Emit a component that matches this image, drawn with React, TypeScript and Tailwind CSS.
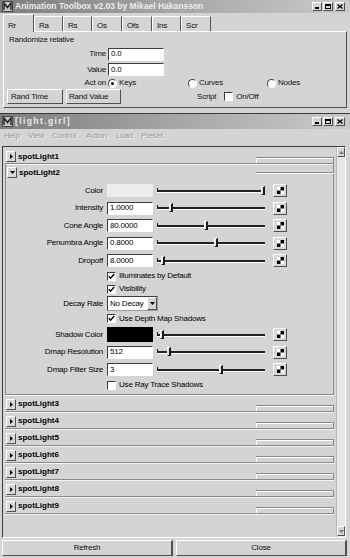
import React from "react";

const raised =
  "border border-t-white border-l-white border-r-[#505050] border-b-[#505050]";
const sunken =
  "border border-t-[#3c3c3c] border-l-[#3c3c3c] border-r-white border-b-white";

function MayaIcon() {
  return (
    <svg width="11" height="11" viewBox="0 0 11 11">
      <rect x="0.5" y="0.5" width="10" height="10" fill="#c4c4c4" stroke="#4a4a4a" />
      <path d="M2 9V2l3.5 4.5L9 2v7" fill="none" stroke="#1e1e1e" strokeWidth="1.4" />
    </svg>
  );
}

function WinButtons() {
  return (
    <div className="flex items-center mr-[5px]">
      <div className={`w-[10px] h-[9px] bg-[#d4d4d4] ${raised} flex items-end justify-center pb-[1px]`}>
        <div className="w-[4px] h-[2px] bg-black" />
      </div>
      <div className={`w-[10px] h-[9px] bg-[#d4d4d4] ${raised} ml-[1px] flex items-center justify-center`}>
        <div className="w-[6px] h-[5px] border border-black border-t-2" />
      </div>
      <div className={`w-[10px] h-[9px] bg-[#d4d4d4] ${raised} ml-[2px] flex items-center justify-center`}>
        <svg width="6" height="5" viewBox="0 0 6 5">
          <path d="M0.5 0.5l5 4M5.5 0.5l-5 4" stroke="black" strokeWidth="1.3" />
        </svg>
      </div>
    </div>
  );
}

function TitleBar({ children, h }: { children: React.ReactNode; h: string }) {
  return (
    <div className={`${h} flex items-center bg-linear-to-r from-[#7e7e7e] via-[#a6a6a6] to-[#cacaca]`}>
      <div className="ml-[2px]">
        <MayaIcon />
      </div>
      <div className="ml-[2px] flex-1 text-[#ececec] font-bold text-[8.5px] tracking-normal whitespace-nowrap">
        {children}
      </div>
      <WinButtons />
    </div>
  );
}

function Radio({ on }: { on?: boolean }) {
  return (
    <div className="w-[9px] h-[9px] rounded-full border border-t-[#4a4a4a] border-l-[#4a4a4a] border-r-white border-b-white bg-white flex items-center justify-center">
      {on && <div className="w-[3px] h-[3px] rounded-full bg-black" />}
    </div>
  );
}

function Check({ on }: { on?: boolean }) {
  return (
    <div className={`w-[9px] h-[9px] bg-white ${sunken} flex items-center justify-center`}>
      {on && (
        <svg width="7" height="7" viewBox="0 0 7 7">
          <path d="M0.8 3.2l1.8 2L6.2 1" fill="none" stroke="black" strokeWidth="1.4" />
        </svg>
      )}
    </div>
  );
}

function Field({ w, value }: { w: string; value: string }) {
  return (
    <div className={`${w} h-[13px] bg-white ${sunken} flex items-center pl-[2px] leading-none text-black`}>
      {value}
    </div>
  );
}

function Slider({ pos }: { pos: number }) {
  return (
    <div className="relative ml-[4px] w-[108px] h-[12px]">
      <div className="absolute left-0 top-[3px] w-[1px] h-[4px] bg-[#1a1a1a]" />
      <div className="absolute left-0 right-0 top-[5px] h-[3px] border-t-2 border-[#222] border-b border-b-white" />
      <div
        className="absolute top-[1px] w-[4px] h-[9px] bg-[#e2e2e2] border-l border-t border-white border-r-2 border-b border-r-[#1a1a1a] border-b-[#1a1a1a]"
        style={{ left: pos - 157 }}
      />
    </div>
  );
}

function MapButton() {
  return (
    <div className={`ml-[8px] w-[14px] h-[13px] bg-[#d8d8d8] ${raised} flex items-center justify-center`}>
      <svg width="7" height="7" viewBox="0 0 7 7">
        <rect x="0" y="0" width="7" height="7" fill="#ffffff" />
        <rect x="3.5" y="0" width="3.5" height="3.5" fill="#000" />
        <rect x="0" y="3.5" width="3.5" height="3.5" fill="#000" />
      </svg>
    </div>
  );
}

function Tri({ open }: { open?: boolean }) {
  return (
    <div className={`ml-[1px] w-[10px] h-[11px] bg-[#d8d8d8] ${raised} flex items-center justify-center`}>
      <svg width="5" height="5" viewBox="0 0 5 5">
        {open ? <path d="M0 1h5L2.5 4z" fill="black" /> : <path d="M1 0v5l3-2.5z" fill="black" />}
      </svg>
    </div>
  );
}

function FrameHeader({ label, open }: { label: string; open?: boolean }) {
  return (
    <div className="h-[16px] flex items-center pt-[3px]">
      <Tri open={open} />
      <span className="ml-[2px] font-bold text-black tracking-normal">{label}</span>
      <div className="flex-1" />
      <div className="self-end w-[78px] h-[6px] border-t border-r border-[#8a8a8a] shadow-[inset_1px_1px_0_#ffffff]" />
    </div>
  );
}

function Collapsed({ label }: { label: string }) {
  return (
    <div className="border-b border-[#8a8a8a] shadow-[0_1px_0_#f4f4f4]">
      <FrameHeader label={label} />
    </div>
  );
}

function Row({ label, h, children }: { label?: string; h: string; children: React.ReactNode }) {
  return (
    <div className={`${h} flex items-center`}>
      <span className="w-[97px] text-right text-black whitespace-nowrap">{label}</span>
      <div className="ml-[4px] flex items-center">{children}</div>
    </div>
  );
}

function CheckRow({ h, on, label }: { h: string; on?: boolean; label: string }) {
  return (
    <Row h={h}>
      <Check on={on} />
      <span className="ml-[3px] text-black">{label}</span>
    </Row>
  );
}

const tabs = [
  { t: "Rr", w: "w-[31px]" },
  { t: "Ra", w: "w-[29px]" },
  { t: "Rs", w: "w-[29px]" },
  { t: "Os", w: "w-[30px]" },
  { t: "Ofs", w: "w-[30px]" },
  { t: "Ins", w: "w-[29px]" },
  { t: "Scr", w: "w-[30px]" },
];

const menu = [
  { t: "Help", w: "w-[24px]" },
  { t: "View", w: "w-[24px]" },
  { t: "Control", w: "w-[34px]" },
  { t: "Action", w: "w-[30px]" },
  { t: "Load", w: "w-[25px]" },
  { t: "Preset", w: "w-[30px]" },
];

export default function App() {
  return (
    <div className="w-[350px] h-[558px] overflow-hidden bg-[#d4d4d4] text-[8px] tracking-[-0.2px] leading-none text-[#111] font-['Liberation_Sans',Arial,sans-serif] flex flex-col">
      {/* Animation Toolbox window */}
      <div className="h-[113px] flex flex-col">
        <TitleBar h="h-[13px]">Animation Toolbox v2.03 by Mikael Hakansson</TitleBar>
        <div className="h-[18px] flex items-end pl-[3px]">
          {tabs.map((tab, i) =>
            i === 0 ? (
              <div
                key={tab.t}
                className={`${tab.w} h-[18px] -mb-[1px] relative z-10 bg-[#d4d4d4] border-t border-l border-white border-r border-r-[#505050] pl-[4px] pt-[7px]`}
              >
                {tab.t}
              </div>
            ) : (
              <div
                key={tab.t}
                className={`${tab.w} h-[15px] border-t border-l border-white border-r border-r-[#505050] pl-[4px] pt-[5px]`}
              >
                {tab.t}
              </div>
            )
          )}
        </div>
        <div className={`mx-[3px] h-[77px] ${raised} flex flex-col`}>
          <div className="h-[14px] flex items-center pl-[5px] pt-[2px]">Randomize relative</div>
          <div className="h-[16px] flex items-center">
            <span className="w-[102px] text-right">Time</span>
            <div className="ml-[2px]">
              <Field w="w-[56px]" value="0.0" />
            </div>
          </div>
          <div className="h-[15px] flex items-center">
            <span className="w-[102px] text-right">Value</span>
            <div className="ml-[2px]">
              <Field w="w-[56px]" value="0.0" />
            </div>
          </div>
          <div className="h-[12px] flex items-center">
            <span className="w-[102px] text-right">Act on</span>
            <div className="ml-[2px] w-[80px] flex items-center">
              <Radio on />
              <span className="ml-[2px]">Keys</span>
            </div>
            <div className="w-[79px] flex items-center">
              <Radio />
              <span className="ml-[2px]">Curves</span>
            </div>
            <div className="flex items-center">
              <Radio />
              <span className="ml-[2px]">Nodes</span>
            </div>
          </div>
          <div className="h-[15px] flex items-center">
            <div className={`ml-[3px] w-[56px] h-[15px] bg-[#d4d4d4] ${raised} flex items-center pl-[3px]`}>Rand Time</div>
            <div className={`ml-[3px] w-[55px] h-[15px] bg-[#d4d4d4] ${raised} flex items-center pl-[2px]`}>Rand Value</div>
            <span className="ml-[76px]">Script</span>
            <div className="ml-[8px]">
              <Check />
            </div>
            <span className="ml-[3px]">On/Off</span>
          </div>
        </div>
      </div>

      {/* light.girl window */}
      <div className="flex-1 flex flex-col border-t border-[#3a3a3a]">
        <TitleBar h="h-[15px]">
          <span className="tracking-[1.4px]">[light.girl]</span>
        </TitleBar>
        <div className="h-[14px] flex items-center pl-[4px] text-[#999999] [text-shadow:1px_1px_0_#f2f2f2]">
          {menu.map((m) => (
            <span key={m.t} className={m.w}>
              {m.t}
            </span>
          ))}
        </div>
        <div className={`mt-[3px] ml-[2px] w-[344px] h-[392px] ${sunken} border-r-[#f4f4f4] flex`}>
          <div className="w-[333px] px-[2px] flex flex-col">
            <Collapsed label="spotLight1" />
            <div className="border-l border-r border-b border-[#8a8a8a] shadow-[0_1px_0_#f4f4f4]">
              <div className="-ml-[1px] -mr-[1px]">
                <div className="h-[16px] flex items-center pt-[1px]">
                  <div className="ml-[1px]">
                    <Tri open />
                  </div>
                  <span className="ml-[2px] font-bold text-black tracking-normal">spotLight2</span>
                  <div className="flex-1" />
                  <div className="self-end w-[78px] h-[8px] border-t border-[#8a8a8a] shadow-[inset_0_1px_0_#ffffff]" />
                </div>
              </div>
              <div className="pt-[2px] pb-[2px] flex flex-col">
                <Row label="Color" h="h-[17.5px]">
                  <div className="w-[46px] h-[13px] bg-[#ececec]" />
                  <Slider pos={261} />
                  <MapButton />
                </Row>
                <Row label="Intensity" h="h-[17.5px]">
                  <Field w="w-[46px]" value="1.0000" />
                  <Slider pos={169} />
                  <MapButton />
                </Row>
                <Row label="Cone Angle" h="h-[17.5px]">
                  <Field w="w-[46px]" value="80.0000" />
                  <Slider pos={204} />
                  <MapButton />
                </Row>
                <Row label="Penumbra Angle" h="h-[17.5px]">
                  <Field w="w-[46px]" value="0.8000" />
                  <Slider pos={214} />
                  <MapButton />
                </Row>
                <Row label="Dropoff" h="h-[17.5px]">
                  <Field w="w-[46px]" value="8.0000" />
                  <Slider pos={161} />
                  <MapButton />
                </Row>
                <CheckRow h="h-[13px]" on label="Illuminates by Default" />
                <CheckRow h="h-[13px]" on label="Visibility" />
                <Row label="Decay Rate" h="h-[16px]">
                  <div className="w-[51px] h-[15px] bg-white border border-t-[#3c3c3c] border-l-[#3c3c3c] border-r-[#9a9a9a] border-b-[#9a9a9a] flex items-center">
                    <span className="flex-1 pl-[2px] text-black whitespace-nowrap">No Decay</span>
                    <div className={`w-[10px] h-[13px] bg-[#d4d4d4] ${raised} flex items-center justify-center`}>
                      <svg width="5" height="3" viewBox="0 0 5 3">
                        <path d="M0 0h5L2.5 3z" fill="black" />
                      </svg>
                    </div>
                  </div>
                </Row>
                <CheckRow h="h-[14px]" on label="Use Depth Map Shadows" />
                <Row label="Shadow Color" h="h-[18px]">
                  <div className="w-[46px] h-[15px] bg-black" />
                  <Slider pos={160} />
                  <MapButton />
                </Row>
                <Row label="Dmap Resolution" h="h-[17.5px]">
                  <Field w="w-[46px]" value="512" />
                  <Slider pos={167} />
                  <MapButton />
                </Row>
                <Row label="Dmap Filter Size" h="h-[17.5px]">
                  <Field w="w-[46px]" value="3" />
                  <Slider pos={219} />
                  <MapButton />
                </Row>
                <CheckRow h="h-[13px]" label="Use Ray Trace Shadows" />
              </div>
            </div>
            {["spotLight3", "spotLight4", "spotLight5", "spotLight6", "spotLight7", "spotLight8", "spotLight9"].map(
              (l) => (
                <Collapsed key={l} label={l} />
              )
            )}
          </div>
          <div className="w-[9px] flex flex-col bg-[#e6e6e6] border-l border-[#b8b8b8]">
            <div className={`h-[10px] bg-[#d4d4d4] ${raised} flex items-center justify-center`}>
              <svg width="5" height="3" viewBox="0 0 5 3">
                <path d="M0 3h5L2.5 0z" fill="#777" />
              </svg>
            </div>
            <div className="flex-1" />
            <div className={`h-[10px] mb-[1px] bg-[#d4d4d4] ${raised} flex items-center justify-center`}>
              <svg width="5" height="3" viewBox="0 0 5 3">
                <path d="M0 0h5L2.5 3z" fill="#777" />
              </svg>
            </div>
          </div>
        </div>
        <div className="mt-[2px] ml-[2px] flex gap-[3px]">
          <div className={`w-[171px] h-[16px] bg-[#d4d4d4] ${raised} border-r-2 flex items-center justify-center`}>Refresh</div>
          <div className={`w-[171px] h-[16px] bg-[#d4d4d4] ${raised} border-r-2 flex items-center justify-center`}>Close</div>
        </div>
      </div>
    </div>
  );
}
